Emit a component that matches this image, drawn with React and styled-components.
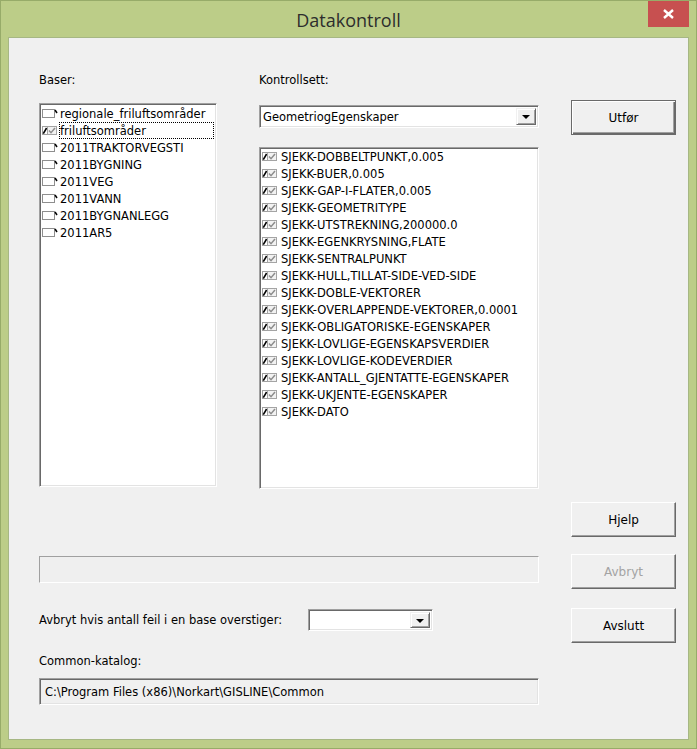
import React from 'react'
import styled, { createGlobalStyle } from 'styled-components'

const GlobalStyle = createGlobalStyle`
  html, body {
    margin: 0;
    padding: 0;
    background: #ffffff;
  }
  body {
    font-family: "DejaVu Sans", "Liberation Sans", sans-serif;
    font-size: 11.5px;
    color: #000;
  }
`

const bases = [
  { name: 'regionale_friluftsområder', checked: false },
  { name: 'friluftsområder', checked: true, focused: true },
  { name: '2011TRAKTORVEGSTI', checked: false },
  { name: '2011BYGNING', checked: false },
  { name: '2011VEG', checked: false },
  { name: '2011VANN', checked: false },
  { name: '2011BYGNANLEGG', checked: false },
  { name: '2011AR5', checked: false },
]

const kontroller = [
  'SJEKK-DOBBELTPUNKT,0.005',
  'SJEKK-BUER,0.005',
  'SJEKK-GAP-I-FLATER,0.005',
  'SJEKK-GEOMETRITYPE',
  'SJEKK-UTSTREKNING,200000.0',
  'SJEKK-EGENKRYSNING,FLATE',
  'SJEKK-SENTRALPUNKT',
  'SJEKK-HULL,TILLAT-SIDE-VED-SIDE',
  'SJEKK-DOBLE-VEKTORER',
  'SJEKK-OVERLAPPENDE-VEKTORER,0.0001',
  'SJEKK-OBLIGATORISKE-EGENSKAPER',
  'SJEKK-LOVLIGE-EGENSKAPSVERDIER',
  'SJEKK-LOVLIGE-KODEVERDIER',
  'SJEKK-ANTALL_GJENTATTE-EGENSKAPER',
  'SJEKK-UKJENTE-EGENSKAPER',
  'SJEKK-DATO',
]

const CheckIcon = ({ checked }) =>
  checked ? (
    <svg width="16" height="12" viewBox="0 0 16 12">
      <rect x="0.5" y="1.5" width="5" height="8" fill="#fff" stroke="#a0a0a0" />
      <path d="M1.3 8.6 L4.6 3" stroke="#000" strokeWidth="1.6" />
      <rect x="5.5" y="1.5" width="9" height="8" fill="#f2f2f2" stroke="#a4a4a4" />
      <path d="M7 5.6 L9 7.7 L13 3" fill="none" stroke="#8c8c8c" strokeWidth="1.5" />
    </svg>
  ) : (
    <svg width="16" height="12" viewBox="0 0 16 12">
      <rect x="0.5" y="1.5" width="12" height="8" fill="#fff" stroke="#8e8e8e" />
      <path d="M13 2 L15 5" stroke="#000" strokeWidth="1.5" />
    </svg>
  )

const Window = styled.div`
  width: 697px;
  height: 749px;
  box-sizing: border-box;
  background: #bccd88;
  border: 1px solid #97ab69;
  display: flex;
  flex-direction: column;
  position: relative;
`

const TitleBar = styled.div`
  height: 36px;
  display: flex;
  align-items: center;
  justify-content: center;
  font-family: "Open Sans", "Noto Sans", sans-serif;
  font-size: 18px;
  color: #2d2d2d;
  padding-top: 2px;
  box-sizing: border-box;
`

const CloseButton = styled.div`
  position: absolute;
  top: 0;
  right: 7px;
  width: 41px;
  height: 26px;
  background: #c75050;
  display: flex;
  align-items: center;
  justify-content: center;
`

const Client = styled.div`
  flex: 1;
  margin: 0 7px 8px 7px;
  border: 1px solid #a6b784;
  background: #f0f0f0;
  padding: 36px 0 0 30px;
  display: flex;
`

const MainArea = styled.div`
  width: 500px;
  display: flex;
  flex-direction: column;
`

const TopRow = styled.div`
  display: flex;
`

const Column = styled.div`
  width: ${(p) => p.$width}px;
  margin-left: ${(p) => p.$offset || 0}px;
  display: flex;
  flex-direction: column;
`

const Label = styled.div`
  height: 13px;
  line-height: 13px;
  white-space: nowrap;
  width: ${(p) => (p.$width ? `${p.$width}px` : 'auto')};
  margin-top: ${(p) => p.$gap || 0}px;
  flex-shrink: 0;
`

const Sunken = styled.div`
  box-sizing: border-box;
  border: 1px solid;
  border-color: #a0a0a0 #ffffff #ffffff #a0a0a0;
  box-shadow: inset 1px 1px #696969, inset -1px -1px #e3e3e3;
`

const ListBox = styled(Sunken)`
  margin-top: ${(p) => p.$gap}px;
  height: ${(p) => p.$height}px;
  background: #fff;
  padding: ${(p) => p.$padTop}px 2px 0 2px;
  overflow: hidden;
`

const Row = styled.div`
  height: 17px;
  display: flex;
  align-items: center;
  white-space: nowrap;
`

const IconSlot = styled.span`
  width: ${(p) => p.$width}px;
  display: flex;
  align-items: center;
  flex-shrink: 0;
`

const ItemText = styled.span`
  flex: 1;
  height: 17px;
  line-height: 16px;
  box-sizing: border-box;
  border: 1px dotted ${(p) => (p.$focused ? '#000' : 'transparent')};
`

const Combo = styled(Sunken)`
  margin-top: ${(p) => p.$gap || 0}px;
  width: ${(p) => p.$width}px;
  height: ${(p) => p.$height}px;
  background: #fff;
  display: flex;
  align-items: stretch;
  padding: 2px;
  flex-shrink: 0;
`

const ComboText = styled.div`
  flex: 1;
  padding-left: 1px;
  display: flex;
  align-items: center;
  white-space: nowrap;
`

const DropButton = styled.div`
  width: 20px;
  box-sizing: border-box;
  background: #f0f0f0;
  border: 1px solid;
  border-color: #f0f0f0 #696969 #696969 #f0f0f0;
  box-shadow: inset 1px 1px #fff, inset -1px -1px #a0a0a0;
  display: flex;
  align-items: center;
  justify-content: center;
`

const Arrow = styled.span`
  width: 0;
  height: 0;
  border-left: 4px solid transparent;
  border-right: 4px solid transparent;
  border-top: 4px solid #000;
  margin-top: 1px;
`

const ProgressBar = styled.div`
  margin-top: 67px;
  height: 27px;
  box-sizing: border-box;
  border: 1px solid;
  border-color: #a0a0a0 #ffffff #ffffff #a0a0a0;
  background: #efefef;
`

const OptionRow = styled.div`
  margin-top: 26px;
  display: flex;
  align-items: center;
`

const PathBox = styled(Sunken)`
  margin-top: 10px;
  height: 27px;
  background: #f0f0f0;
  padding-left: 5px;
  display: flex;
  align-items: center;
  white-space: nowrap;
`

const ButtonColumn = styled.div`
  margin-left: 32px;
  width: 105px;
  padding-top: 26px;
  display: flex;
  flex-direction: column;
`

const Button = styled.div`
  margin-top: ${(p) => p.$gap || 0}px;
  height: 35px;
  box-sizing: border-box;
  background: #f0f0f0;
  display: flex;
  align-items: center;
  justify-content: center;
  color: ${(p) => (p.$disabled ? '#a3a3a3' : '#000')};
  font-size: 12px;
  border: 1px solid;
  border-color: ${(p) =>
    p.$default ? '#6a6a6a' : '#ffffff #696969 #696969 #ffffff'};
  box-shadow: ${(p) =>
    p.$default
      ? 'inset 1px 1px #fff, inset -1px -1px #696969, inset -2px -2px #a0a0a0'
      : 'inset -1px -1px #a0a0a0'};
`

export default function App() {
  return (
    <>
      <GlobalStyle />
      <Window>
        <TitleBar>Datakontroll</TitleBar>
        <CloseButton>
          <svg width="11" height="10" viewBox="0 0 11 10">
            <path d="M1 1 L10 9 M10 1 L1 9" stroke="#fff" strokeWidth="2.4" />
          </svg>
        </CloseButton>
        <Client>
          <MainArea>
            <TopRow>
              <Column $width={178}>
                <Label>Baser:</Label>
                <ListBox $gap={16} $height={384} $padTop={1}>
                  {bases.map((b) => (
                    <Row key={b.name}>
                      <IconSlot $width={17}>
                        <CheckIcon checked={b.checked} />
                      </IconSlot>
                      <ItemText $focused={b.focused}>{b.name}</ItemText>
                    </Row>
                  ))}
                </ListBox>
              </Column>
              <Column $width={280} $offset={42}>
                <Label>Kontrollsett:</Label>
                <Combo $gap={18} $width={280} $height={23}>
                  <ComboText>GeometriogEgenskaper</ComboText>
                  <DropButton>
                    <Arrow />
                  </DropButton>
                </Combo>
                <ListBox $gap={19} $height={342} $padTop={0}>
                  {kontroller.map((k) => (
                    <Row key={k}>
                      <IconSlot $width={18}>
                        <CheckIcon checked />
                      </IconSlot>
                      <ItemText>{k}</ItemText>
                    </Row>
                  ))}
                </ListBox>
              </Column>
            </TopRow>
            <ProgressBar />
            <OptionRow>
              <Label $width={269}>Avbryt hvis antall feil i en base overstiger:</Label>
              <Combo $width={125} $height={22}>
                <ComboText />
                <DropButton>
                  <Arrow />
                </DropButton>
              </Combo>
            </OptionRow>
            <Label $gap={24}>Common-katalog:</Label>
            <PathBox>C:\Program Files (x86)\Norkart\GISLINE\Common</PathBox>
          </MainArea>
          <ButtonColumn>
            <Button $default>Utfør</Button>
            <Button $gap={367}>Hjelp</Button>
            <Button $gap={17} $disabled>
              Avbryt
            </Button>
            <Button $gap={19}>Avslutt</Button>
          </ButtonColumn>
        </Client>
      </Window>
    </>
  )
}
